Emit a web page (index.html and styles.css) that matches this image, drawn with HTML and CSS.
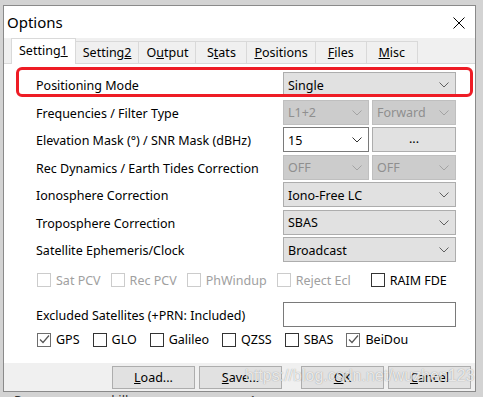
FILE: index.html
```html
<!DOCTYPE html>
<html>

<head>
	<link rel="stylesheet" href="styles.css">
</head>

<body>
	<div class="window">
		<div class="titlebar">
			<span class="title">Options</span>
			<svg class="close" width="12" height="12" viewBox="0 0 12 12">
				<path d="M0.5 0.5 L11.5 11.5 M11.5 0.5 L0.5 11.5" stroke="#000" stroke-width="1" fill="none" />
			</svg>
		</div>
		<div class="tabs">
			<div class="tab active">Setting<u>1</u></div>
			<div class="tab">Setting<u>2</u></div>
			<div class="tab">O<u>u</u>tput</div>
			<div class="tab">S<u>t</u>ats</div>
			<div class="tab"><u>P</u>ositions</div>
			<div class="tab"><u>F</u>iles</div>
			<div class="tab"><u>M</u>isc</div>
		</div>
		<div class="page">
			<div class="highlight"></div>
			<div class="form">
				<span class="label">Positioning Mode</span>
				<div class="select"><span>Single</span><svg class="chev" width="10" height="6" viewBox="0 0 10 6"><path d="M0.5 0.5 L5 5 L9.5 0.5" /></svg></div>

				<span class="label">Frequencies / Filter Type</span>
				<div class="pair">
					<div class="select disabled"><span>L1+2</span><svg class="chev" width="10" height="6" viewBox="0 0 10 6"><path d="M0.5 0.5 L5 5 L9.5 0.5" /></svg></div>
					<div class="select disabled"><span>Forward</span><svg class="chev" width="10" height="6" viewBox="0 0 10 6"><path d="M0.5 0.5 L5 5 L9.5 0.5" /></svg></div>
				</div>

				<span class="label">Elevation Mask (°) / SNR Mask (dBHz)</span>
				<div class="pair">
					<div class="select combo"><span>15</span><svg class="chev" width="10" height="6" viewBox="0 0 10 6"><path d="M0.5 0.5 L5 5 L9.5 0.5" /></svg></div>
					<div class="button dots">...</div>
				</div>

				<span class="label">Rec Dynamics / Earth Tides Correction</span>
				<div class="pair">
					<div class="select disabled"><span>OFF</span><svg class="chev" width="10" height="6" viewBox="0 0 10 6"><path d="M0.5 0.5 L5 5 L9.5 0.5" /></svg></div>
					<div class="select disabled"><span>OFF</span><svg class="chev" width="10" height="6" viewBox="0 0 10 6"><path d="M0.5 0.5 L5 5 L9.5 0.5" /></svg></div>
				</div>

				<span class="label">Ionosphere Correction</span>
				<div class="select"><span>Iono-Free LC</span><svg class="chev" width="10" height="6" viewBox="0 0 10 6"><path d="M0.5 0.5 L5 5 L9.5 0.5" /></svg></div>

				<span class="label">Troposphere Correction</span>
				<div class="select"><span>SBAS</span><svg class="chev" width="10" height="6" viewBox="0 0 10 6"><path d="M0.5 0.5 L5 5 L9.5 0.5" /></svg></div>

				<span class="label">Satellite Ephemeris/Clock</span>
				<div class="select"><span>Broadcast</span><svg class="chev" width="10" height="6" viewBox="0 0 10 6"><path d="M0.5 0.5 L5 5 L9.5 0.5" /></svg></div>
			</div>

			<div class="checks opts">
				<label class="check disabled"><span class="box"></span>Sat PCV</label>
				<label class="check disabled"><span class="box"></span>Rec PCV</label>
				<label class="check disabled"><span class="box"></span>PhWindup</label>
				<label class="check disabled"><span class="box"></span>Reject Ecl</label>
				<label class="check raim"><span class="box"></span>RAIM FDE</label>
			</div>

			<div class="form excl">
				<span class="label">Excluded Satellites (+PRN: Included)</span>
				<div class="textbox"></div>
			</div>

			<div class="checks systems">
				<label class="check"><span class="box checked"><svg width="13" height="13" viewBox="0 0 13 13"><path d="M2 6.5 L5 9.5 L11 2.5" /></svg></span>GPS</label>
				<label class="check"><span class="box"></span>GLO</label>
				<label class="check"><span class="box"></span>Galileo</label>
				<label class="check"><span class="box"></span>QZSS</label>
				<label class="check"><span class="box"></span>SBAS</label>
				<label class="check"><span class="box checked"><svg width="13" height="13" viewBox="0 0 13 13"><path d="M2 6.5 L5 9.5 L11 2.5" /></svg></span>BeiDou</label>
			</div>
		</div>
		<div class="buttons">
			<div class="button"><u>L</u>oad...</div>
			<div class="button"><u>S</u>ave...</div>
			<div class="button ok"><u>O</u>K</div>
			<div class="button"><u>C</u>ancel</div>
		</div>
	</div>
	<div class="behind">Pooooooooooe.kill_ oeooooooooo.ao, 1oo</div>
	<div class="watermark">https://blog.csdn.net/wuzhen123</div>
</body>

</html>
```

FILE: styles.css
```css
body {
	margin: 0;
	width: 483px;
	height: 397px;
	overflow: hidden;
	position: relative;
	background-color: #d3d3d3;
	font: 12.5px "Noto Sans", sans-serif;
	color: #000000;
}

.window {
	margin: 5px 0 0 3px;
	width: 473px;
	box-sizing: border-box;
	border: 1px solid #8a8a8a;
	background-color: #f0f0f0;
}

.titlebar {
	height: 32px;
	display: flex;
	align-items: center;
	justify-content: space-between;
	padding: 0 10px 0 3px;
	background-color: #ffffff;
}

.title {
	font-size: 15px;
}

.close {
	margin-top: 1px;
}

.tabs {
	height: 25px;
	display: flex;
	align-items: flex-end;
	padding-left: 8px;
}

.tab {
	height: 22px;
	min-width: 52px;
	padding: 0 7px;
	box-sizing: border-box;
	margin-left: -1px;
	display: flex;
	align-items: center;
	justify-content: center;
	border: 1px solid #d9d9d9;
	border-bottom: none;
	background-color: #f0f0f0;
}

.tab.active {
	height: 26px;
	margin-bottom: -1px;
	position: relative;
	z-index: 1;
	background-color: #ffffff;
	padding-bottom: 2px;
}

.page {
	position: relative;
	height: 300px;
	box-sizing: border-box;
	padding: 8px 0 0 32px;
	border-top: 1px solid #d9d9d9;
	background-color: #ffffff;
}

.highlight {
	position: absolute;
	left: 12px;
	top: 3px;
	width: 457px;
	height: 30px;
	box-sizing: border-box;
	border: 3px solid #ee1c25;
	border-radius: 6px;
}

.form {
	display: grid;
	grid-template-columns: 247px 173px;
	grid-auto-rows: 25px;
	row-gap: 2.5px;
}

.label {
	align-self: center;
	padding-top: 2px;
}

.pair {
	display: grid;
	grid-template-columns: 86px 84px;
	column-gap: 3px;
}

.select {
	display: flex;
	align-items: center;
	justify-content: space-between;
	box-sizing: border-box;
	padding: 1px 6px 0 4px;
	border: 1px solid #adadad;
	background-color: #e1e1e1;
}

.chev path {
	fill: none;
	stroke: #606060;
	stroke-width: 1;
}

.select.disabled {
	border-color: #bfbfbf;
	background-color: #cccccc;
	color: #8f8f8f;
}

.select.disabled .chev path {
	stroke: #a3a3a3;
}

.select.combo {
	border-color: #7a7a7a;
	background-color: #ffffff;
}

.select.combo .chev path {
	stroke: #333333;
}

.button {
	display: flex;
	align-items: center;
	justify-content: center;
	box-sizing: border-box;
	border: 1px solid #adadad;
	background-color: #e1e1e1;
}

.dots {
	padding-bottom: 2px;
}

.checks {
	height: 25px;
	display: flex;
	align-items: center;
}

.opts {
	margin-top: 5.5px;
	gap: 10px;
}

.systems {
	gap: 13px;
}

.check {
	display: flex;
	align-items: center;
	gap: 5px;
	margin-left: 1px;
}

.check + .check {
	margin-left: 0;
}

.raim {
	margin-left: 10px !important;
}

.box {
	width: 14px;
	height: 14px;
	box-sizing: border-box;
	border: 1px solid #333333;
	background-color: #ffffff;
}

.box svg {
	display: block;
	margin: -0.5px 0 0 -0.5px;
}

.box.checked {
	border-color: #6d6d6d;
}

.box svg path {
	fill: none;
	stroke: #555555;
	stroke-width: 1.2;
}

.check.disabled {
	color: #a0a0a0;
}

.check.disabled .box {
	border-color: #cccccc;
}

.excl {
	margin-top: 9.5px;
}

.textbox {
	border: 1px solid #7a7a7a;
	background-color: #ffffff;
}

.buttons {
	height: 28px;
	display: flex;
	align-items: center;
	justify-content: flex-end;
	gap: 4px;
	padding-right: 4px;
}

.buttons .button {
	width: 83px;
	height: 23px;
}

.buttons .ok {
	margin-left: 15px;
}

.behind {
	height: 5px;
	overflow: hidden;
	padding-left: 14px;
	font-size: 13px;
	line-height: 16px;
	color: #333333;
}

.watermark {
	position: absolute;
	left: 245px;
	top: 368px;
	font: 16px "Liberation Sans", Arial, sans-serif;
	line-height: 16px;
	color: rgba(255, 255, 255, 0.8);
	text-shadow: 0 0 1px rgba(80, 80, 80, 0.6);
}
```
